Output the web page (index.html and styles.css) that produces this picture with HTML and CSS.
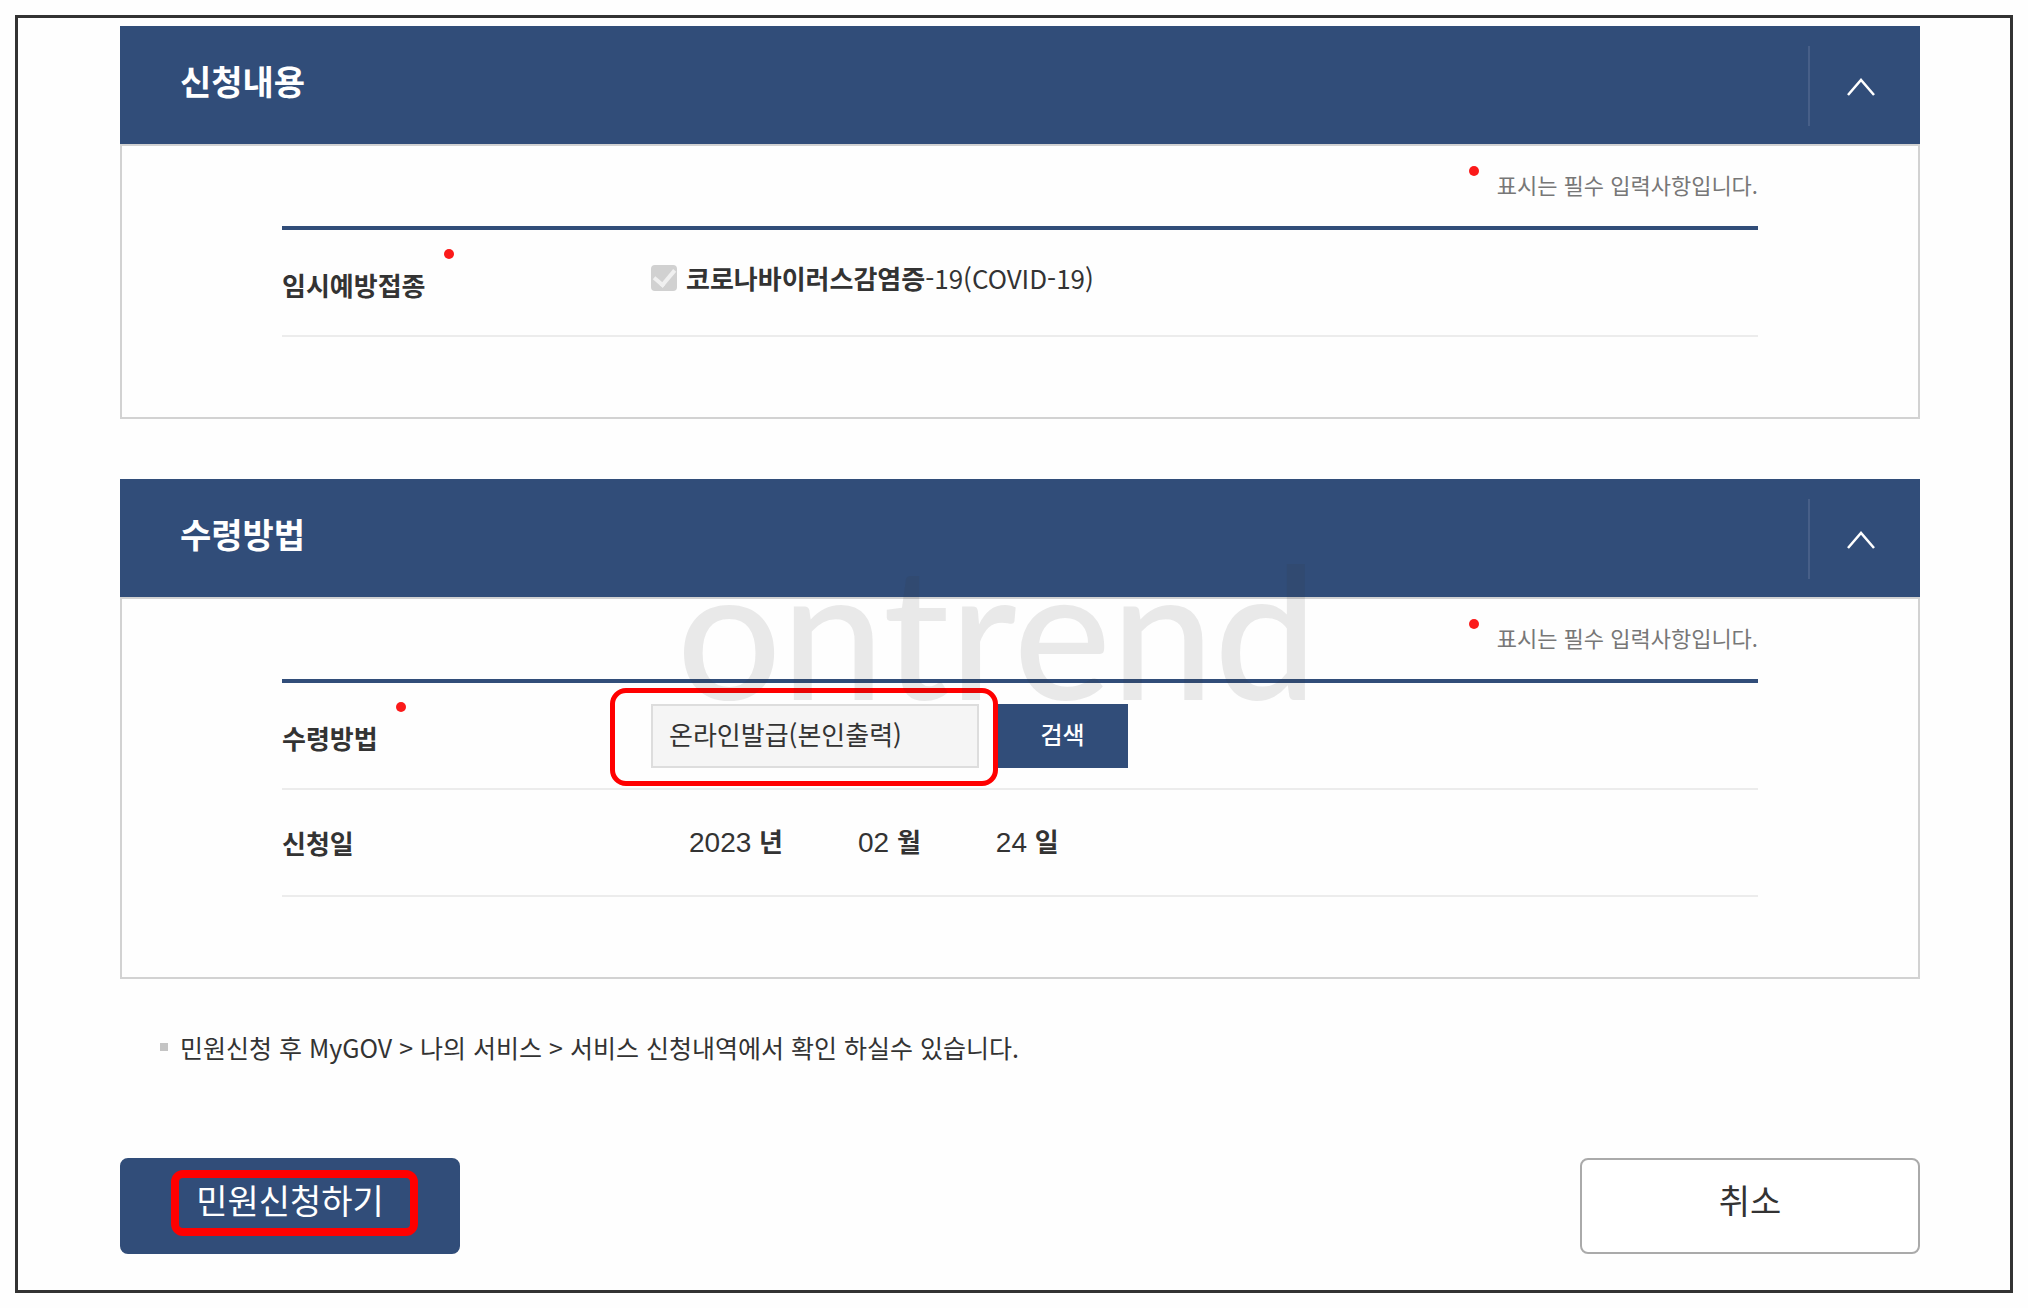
FILE: index.html
```html
<!DOCTYPE html>
<html lang="ko">
<head>
  <meta charset="utf-8">
  <meta name="viewport" content="width=device-width, initial-scale=1">
  <title>민원신청</title>
  <link rel="stylesheet" href="styles.css">
</head>
<body>
  <main class="frame">
    <form class="form">
      <section class="panel">
        <header class="panel-head">
          <h2 class="panel-title">신청내용</h2>
          <button class="toggle" type="button" aria-label="신청내용 접기" aria-expanded="true">
            <svg class="chevron" viewBox="0 0 28 18" aria-hidden="true"><path d="M1 17 14 2 27 17"/></svg>
          </button>
        </header>
        <div class="panel-body">
          <p class="required-note"><span class="dot"></span>표시는 필수 입력사항입니다.</p>
          <div class="rows">
            <div class="row">
              <span class="row-label">임시예방접종<span class="dot"></span></span>
              <div class="row-value">
                <input class="check" type="checkbox" id="covid" checked disabled>
                <label class="check-label" for="covid"><b>코로나바이러스감염증</b>-19(COVID-19)</label>
              </div>
            </div>
          </div>
        </div>
      </section>

      <section class="panel">
        <header class="panel-head">
          <h2 class="panel-title">수령방법</h2>
          <button class="toggle" type="button" aria-label="수령방법 접기" aria-expanded="true">
            <svg class="chevron" viewBox="0 0 28 18" aria-hidden="true"><path d="M1 17 14 2 27 17"/></svg>
          </button>
        </header>
        <div class="panel-body">
          <p class="required-note"><span class="dot"></span>표시는 필수 입력사항입니다.</p>
          <div class="rows">
            <div class="row">
              <label class="row-label" for="method">수령방법<span class="dot"></span></label>
              <div class="row-value search">
                <span class="field">
                  <input class="text-input" type="text" id="method" value="온라인발급(본인출력)" readonly>
                  <span class="mark mark-field"></span>
                </span>
                <button class="search-button" type="button">검색</button>
              </div>
            </div>
            <div class="row">
              <span class="row-label">신청일</span>
              <div class="row-value date">
                <span class="date-part">2023 <b>년</b></span>
                <span class="date-part">02 <b>월</b></span>
                <span class="date-part">24 <b>일</b></span>
              </div>
            </div>
          </div>
          <span class="watermark">ontrend</span>
        </div>
      </section>

      <ul class="notes">
        <li class="note">민원신청 후 MyGOV &gt; 나의 서비스 &gt; 서비스 신청내역에서 확인 하실수 있습니다.</li>
      </ul>

      <div class="actions">
        <button class="action primary" type="submit">민원신청하기<span class="mark mark-action"></span></button>
        <button class="action" type="button">취소</button>
      </div>
    </form>
  </main>
</body>
</html>
```
FILE: styles.css
```css
:root {
  --navy: #314d79;
  --ink: #333;
  --red: #f00;
}

* {
  box-sizing: border-box;
}

body {
  margin: 0;
  padding: 15px;
  background: #fefefe;
  color: var(--ink);
  font: 26px/36px "Noto Sans CJK KR", sans-serif;
}

button,
input {
  margin: 0;
  font: inherit;
  color: inherit;
}

.frame {
  padding: 8px 90px 36px 102px;
  border: 3px solid var(--ink);
}

.panel {
  margin-bottom: 60px;
}

.panel-head {
  display: flex;
  align-items: flex-start;
  justify-content: space-between;
  height: 118px;
  padding: 20px 0 0 60px;
  background: var(--navy);
  color: #fff;
}

.panel-title {
  margin: 11px 0 0;
  font-size: 34px;
  line-height: 48px;
  font-weight: 700;
}

.toggle {
  display: flex;
  align-items: center;
  width: 112px;
  height: 80px;
  padding: 2px 0 0 37px;
  border: 0;
  border-left: 2px solid #475f88;
  background: none;
}

.chevron {
  width: 28px;
  height: 18px;
  fill: none;
  stroke: #fff;
  stroke-width: 2.5;
}

.panel-body {
  position: relative;
  padding: 20px 160px 80px;
  border: 2px solid #d2d2d2;
}

.required-note {
  display: flex;
  justify-content: flex-end;
  align-items: flex-start;
  gap: 18px;
  height: 60px;
  margin: 0;
  color: #777;
  font-size: 22px;
}

.dot {
  flex: none;
  width: 10px;
  height: 10px;
  border-radius: 50%;
  background: #fb1a1a;
}

.rows {
  border-top: 4px solid var(--navy);
}

.row {
  display: grid;
  grid-template-columns: 25% 1fr;
  align-items: center;
  min-height: 107px;
  border-bottom: 2px solid #ececec;
}

.row-label {
  display: flex;
  gap: 18px;
  padding-top: 5px;
  font-weight: 700;
}

.row-label .dot {
  margin-top: -18px;
}

.row-label:only-child,
.row:nth-child(2) .row-label {
  padding-top: 0;
}

.row-value {
  display: flex;
  align-items: center;
}

.check {
  appearance: none;
  width: 26px;
  height: 26px;
  margin-right: 9px;
  border-radius: 4px;
  background: #d1d1d1;
  display: grid;
  place-items: center;
}

.check:checked::after {
  content: "";
  width: 9px;
  height: 17px;
  margin-top: -4px;
  border: solid #f0f0f0;
  border-width: 0 4px 4px 0;
  transform: rotate(40deg);
}

.check,
.check-label {
  margin-bottom: 10px;
}

.search {
  gap: 18px;
}

.field {
  position: relative;
  display: flex;
  width: 328px;
}

.text-input {
  width: 100%;
  height: 64px;
  padding: 0 16px 4px;
  border: 2px solid #ddd;
  border-radius: 0;
  background: #f5f5f5;
}

.search-button {
  width: 131px;
  height: 64px;
  padding: 0 0 4px;
  border: 0;
  background: var(--navy);
  color: #fff;
  font-size: 24px;
  font-weight: 500;
}

/* Red outlines that point at the fields to use */
.mark {
  position: absolute;
  border: 5px solid var(--red);
  border-radius: 16px;
  pointer-events: none;
}

.mark-field {
  inset: -16px -19px -18px -41px;
}

.date {
  gap: 75px;
  padding-left: 38px;
}

.date-part {
  font-family: "Liberation Sans", "Noto Sans CJK KR", sans-serif;
  font-size: 28px;
}

.date-part b {
  font-size: 26px;
}

.watermark {
  position: absolute;
  top: -60px;
  left: 50%;
  transform: translateX(-50%);
  margin-left: -23px;
  color: rgba(50, 50, 50, 0.1);
  font: 500 184px/180px Lato, sans-serif;
  pointer-events: none;
}

.notes {
  margin: -10px 0 0;
  padding: 0 0 0 40px;
  list-style: none;
}

.note {
  display: flex;
  align-items: center;
  gap: 12px;
  font-size: 25px;
}

.note::before {
  content: "";
  width: 8px;
  height: 8px;
  background: #c4c4c4;
}

.actions {
  display: flex;
  justify-content: space-between;
  margin-top: 93px;
}

.action {
  position: relative;
  width: 340px;
  height: 96px;
  padding: 0 0 12px;
  border: 2px solid #aaa;
  border-radius: 8px;
  background: #fff;
  font-size: 34px;
}

.primary {
  border-color: var(--navy);
  background: var(--navy);
  color: #fff;
}

.mark-action {
  inset: 10px 40px 16px 49px;
  border-width: 8px;
  border-radius: 12px;
}
```
